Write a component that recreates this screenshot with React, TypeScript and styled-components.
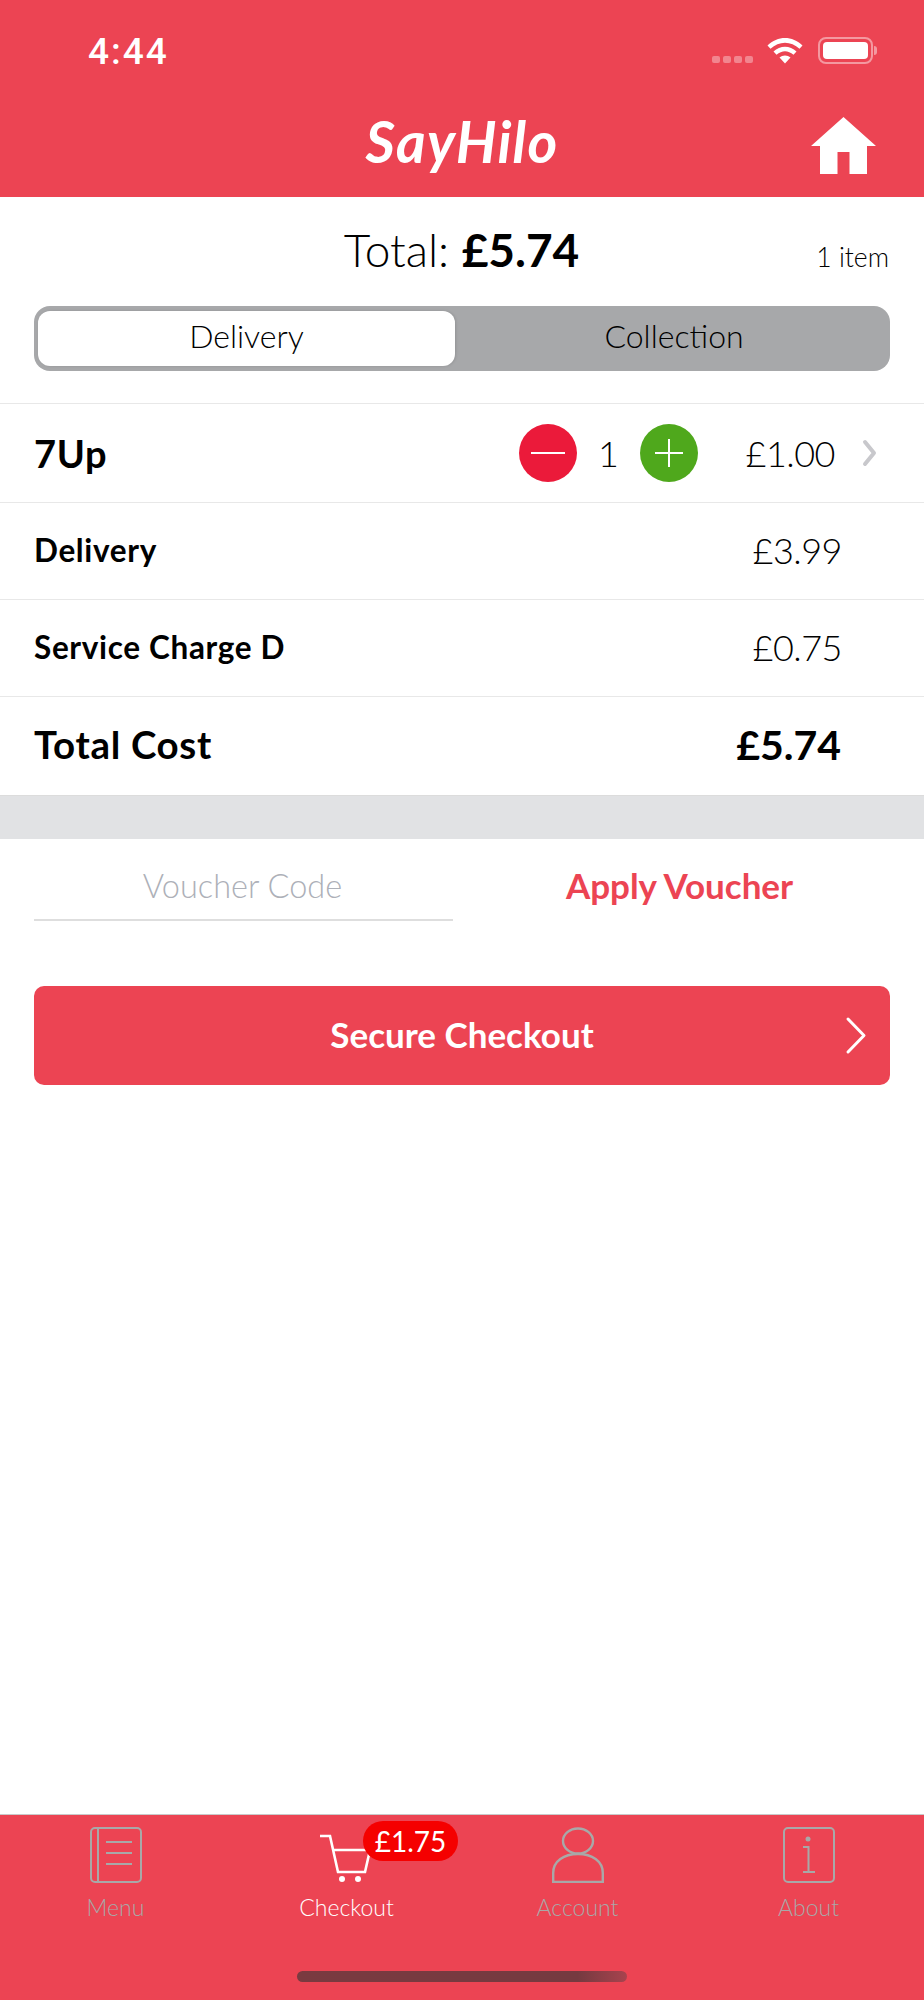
import React from 'react';
import styled, { createGlobalStyle } from 'styled-components';

const BRAND = '#ec4453';
const FONT = 'Lato, "Open Sans", "Liberation Sans", sans-serif';

const GlobalStyle = createGlobalStyle`
  html, body {
    margin: 0;
    padding: 0;
    background: #fff;
  }
  * {
    box-sizing: border-box;
  }
`;

const Page = styled.div`
  width: 924px;
  height: 2000px;
  display: flex;
  flex-direction: column;
  font-family: ${FONT};
  color: #000;
  background: #fff;
  overflow: hidden;
`;

const Header = styled.header`
  height: 197px;
  background: ${BRAND};
  flex-shrink: 0;
`;

const StatusBar = styled.div`
  height: 100px;
  display: flex;
  align-items: flex-start;
  justify-content: space-between;
  padding: 38px 51px 0 88px;
`;

const Clock = styled.span`
  font-family: Roboto, sans-serif;
  font-size: 37px;
  font-weight: 500;
  line-height: 27px;
  letter-spacing: 2px;
  color: #fff;
`;

const StatusIcons = styled.div`
  display: flex;
  align-items: flex-start;
  margin-top: -1px;
`;

const SignalDots = styled.div`
  display: flex;
  gap: 3px;
  margin: 19px 14px 0 0;
`;

const SignalDot = styled.span`
  width: 8px;
  height: 7px;
  border-radius: 2px;
  background: rgba(255, 255, 255, 0.35);
`;

const Battery = styled.div`
  width: 55px;
  height: 27px;
  margin-left: 15px;
  padding: 3px;
  border: 2px solid rgba(255, 255, 255, 0.45);
  border-radius: 8px;
  position: relative;

  &::before {
    content: '';
    display: block;
    height: 100%;
    border-radius: 4px;
    background: #fff;
  }

  &::after {
    content: '';
    position: absolute;
    right: -6px;
    top: 7px;
    width: 3px;
    height: 9px;
    border-radius: 0 3px 3px 0;
    background: rgba(255, 255, 255, 0.45);
  }
`;

const NavRow = styled.div`
  height: 97px;
  display: grid;
  grid-template-columns: 1fr auto 1fr;
  padding: 17px 48px 0 0;
`;

const Logo = styled.div`
  font-family: Lato, sans-serif;
  font-size: 57px;
  font-weight: 700;
  font-style: italic;
  line-height: 56px;
  letter-spacing: 1.2px;
  color: #fff;
  grid-column: 2;
  margin: -4px 0 0 48px;
`;

const HomeButton = styled.div`
  grid-column: 3;
  justify-self: end;
`;

const SummaryRow = styled.div`
  display: grid;
  grid-template-columns: 1fr auto 1fr;
  align-items: baseline;
  height: 109px;
  padding: 27px 35px 0 34px;
  flex-shrink: 0;
`;

const SummaryTotal = styled.div`
  grid-column: 2;
  font-size: 46px;
  font-weight: 300;
  line-height: 52px;
  white-space: nowrap;

  strong {
    font-weight: 700;
  }
`;

const ItemCount = styled.div`
  grid-column: 3;
  justify-self: end;
  font-size: 26.5px;
  font-weight: 300;
`;

const Segmented = styled.div`
  height: 65px;
  margin: 0 34px 32px;
  padding: 5px 0 5px 4px;
  display: grid;
  grid-template-columns: 417px 1fr;
  flex-shrink: 0;
  background: #a7a8aa;
  border-radius: 16px;
`;

const Segment = styled.div<{ $active?: boolean }>`
  display: flex;
  align-items: center;
  justify-content: center;
  font-size: 32px;
  font-weight: 300;
  border-radius: 12px;
  padding: 0 0 6px ${(p) => (p.$active ? 0 : 3)}px;
  background: ${(p) => (p.$active ? '#fff' : 'transparent')};
  box-shadow: ${(p) => (p.$active ? '1px 0 3px rgba(0, 0, 0, 0.12)' : 'none')};
`;

const Row = styled.div<{ $height: number }>`
  height: ${(p) => p.$height}px;
  display: flex;
  align-items: center;
  padding: 0 0 0 34px;
  border-top: 1px solid #e8e8e8;
  flex-shrink: 0;
`;

const RowLabel = styled.div<{ $size: number; $lift?: number }>`
  flex: 1;
  font-size: ${(p) => p.$size}px;
  font-weight: 700;
  letter-spacing: 0.65px;
  padding-bottom: ${(p) => p.$lift ?? 0}px;
`;

const RowValue = styled.div<{ $bold?: boolean }>`
  width: 140px;
  margin-right: ${(p) => (p.$bold ? 83 : 82)}px;
  padding-bottom: ${(p) => (p.$bold ? 4 : 3)}px;
  text-align: right;
  font-size: ${(p) => (p.$bold ? 41 : 36)}px;
  font-weight: ${(p) => (p.$bold ? 700 : 300)};
  letter-spacing: ${(p) => (p.$bold ? 0 : -0.5)}px;
`;

const QtyButton = styled.div<{ $color: string }>`
  width: 58px;
  height: 58px;
  border-radius: 50%;
  display: flex;
  align-items: center;
  justify-content: center;
  background: ${(p) => p.$color};
`;

const Qty = styled.div`
  width: 63px;
  text-align: center;
  font-size: 36px;
  font-weight: 300;
`;

const ItemPrice = styled.div`
  width: 137px;
  text-align: right;
  font-size: 36px;
  font-weight: 300;
  letter-spacing: -0.5px;
`;

const RowChevron = styled.div`
  width: 89px;
  padding-left: 26px;
  display: flex;
`;

const Band = styled.div`
  height: 44px;
  background: #e1e2e4;
  border-top: 1px solid #dcdcdc;
  flex-shrink: 0;
`;

const VoucherRow = styled.div`
  display: grid;
  grid-template-columns: 419px 1fr;
  gap: 0;
  margin: 0 34px;
  height: 147px;
  flex-shrink: 0;
`;

const VoucherInput = styled.div`
  height: 82px;
  display: flex;
  align-items: center;
  justify-content: center;
  padding: 13px 2px 0 0;
  font-size: 32.5px;
  font-weight: 300;
  color: #adb0b8;
  border-bottom: 2px solid #dedede;
`;

const ApplyVoucher = styled.div`
  height: 92px;
  display: flex;
  align-items: center;
  justify-content: center;
  padding-left: 16px;
  font-size: 35px;
  font-weight: 700;
  color: ${BRAND};
`;

const CheckoutButton = styled.div`
  height: 99px;
  margin: 0 34px;
  position: relative;
  display: flex;
  align-items: center;
  justify-content: center;
  flex-shrink: 0;
  padding-bottom: 3px;
  font-size: 35px;
  font-weight: 700;
  color: #fff;
  background: ${BRAND};
  border-radius: 10px;
`;

const CheckoutChevron = styled.div`
  position: absolute;
  right: 23px;
  top: 30px;
  display: flex;
`;

const Spacer = styled.div`
  flex: 1;
`;

const TabBar = styled.nav`
  height: 186px;
  background: ${BRAND};
  border-top: 1px solid #c9c9c9;
  display: flex;
  flex-direction: column;
  flex-shrink: 0;
`;

const Tabs = styled.div`
  display: grid;
  grid-template-columns: repeat(4, 1fr);
  padding-top: 12px;
`;

const Tab = styled.div<{ $active?: boolean }>`
  position: relative;
  display: flex;
  flex-direction: column;
  align-items: center;
  color: ${(p) => (p.$active ? '#fff' : '#a8a8a8')};
`;

const TabIcon = styled.div<{ $shift?: number }>`
  height: 58px;
  display: flex;
  margin-left: ${(p) => p.$shift ?? 0}px;
`;

const TabLabel = styled.div`
  margin-top: 8px;
  font-size: 23px;
  font-weight: 300;
  line-height: 28px;
`;

const PriceBadge = styled.div`
  position: absolute;
  left: 132px;
  top: -6px;
  width: 95px;
  height: 40px;
  display: flex;
  align-items: center;
  justify-content: center;
  border-radius: 20px;
  font-size: 28px;
  font-weight: 400;
  color: #fff;
  background: #f50000;
`;

const HomeIndicator = styled.div`
  width: 330px;
  height: 11px;
  margin: 50px auto 0;
  border-radius: 6px;
  background: linear-gradient(90deg, #7a3a40 0%, #753a40 85%, #a8434e 100%);
`;

function WifiIcon() {
  return (
    <svg width="36" height="27" viewBox="0 0 36 27">
      <path d="M0.5 8.5C10.5 -1.5 25.5 -1.5 35.5 8.5L32.5 11.8C24 3.8 12 3.8 3.5 11.8Z" fill="#fff" />
      <path d="M6.5 14.5C13 8.2 23 8.2 29.5 14.5L26.5 17.8C21 13 15 13 9.5 17.8Z" fill="#fff" />
      <path d="M12.5 20.5C15.5 17.8 20.5 17.8 23.5 20.5L18 26.5Z" fill="#fff" />
    </svg>
  );
}

function HomeIcon() {
  return (
    <svg width="65" height="57" viewBox="0 0 65 57">
      <path
        d="M32.5 0L65 29H56V57H38.5V35H26.5V57H9V29H0Z"
        fill="#fff"
      />
    </svg>
  );
}

function Chevron({ color, width, height, stroke }: { color: string; width: number; height: number; stroke: number }) {
  return (
    <svg width={width} height={height} viewBox={`0 0 ${width} ${height}`}>
      <path
        d={`M${stroke} ${stroke}L${width - stroke} ${height / 2}L${stroke} ${height - stroke}`}
        fill="none"
        stroke={color}
        strokeWidth={stroke}
        strokeLinecap="round"
        strokeLinejoin="round"
      />
    </svg>
  );
}

function MinusIcon() {
  return (
    <svg width="36" height="36" viewBox="0 0 36 36">
      <path d="M1 18H35" stroke="#fff" strokeWidth="2" />
    </svg>
  );
}

function PlusIcon() {
  return (
    <svg width="28" height="28" viewBox="0 0 28 28">
      <path d="M0 14H28M14 0V28" stroke="#fff" strokeWidth="2" />
    </svg>
  );
}

function MenuIcon() {
  return (
    <svg width="52" height="56" viewBox="0 0 52 56" fill="none" stroke="currentColor" strokeWidth="2">
      <rect x="1" y="1" width="50" height="54" rx="4" />
      <path d="M8 1V55M16 15H42M16 26H42M16 37H42" />
    </svg>
  );
}

function CartIcon() {
  return (
    <svg width="52" height="58" viewBox="0 0 52 58" fill="none" stroke="currentColor" strokeWidth="2.6">
      <path d="M1 9H11L19 45H46L51 23H14" />
      <circle cx="23" cy="52" r="3" fill="currentColor" stroke="none" />
      <circle cx="39" cy="52" r="3" fill="currentColor" stroke="none" />
    </svg>
  );
}

function AccountIcon() {
  return (
    <svg width="52" height="56" viewBox="0 0 52 56" fill="none" stroke="currentColor" strokeWidth="2.4">
      <ellipse cx="26" cy="14" rx="15" ry="12.5" />
      <path d="M1.2 55V46C1.2 34 12 27 26 27C40 27 50.8 34 50.8 46V55Z" />
    </svg>
  );
}

function AboutIcon() {
  return (
    <svg width="52" height="56" viewBox="0 0 52 56" fill="none" stroke="currentColor" strokeWidth="2">
      <rect x="1" y="1" width="50" height="54" rx="4" />
      <circle cx="25" cy="12" r="2.5" fill="currentColor" stroke="none" />
      <path d="M20 20H25.5V44M20 45H32" />
    </svg>
  );
}

export default function App() {
  return (
    <Page>
      <GlobalStyle />
      <Header>
        <StatusBar>
          <Clock>4:44</Clock>
          <StatusIcons>
            <SignalDots>
              <SignalDot />
              <SignalDot />
              <SignalDot />
              <SignalDot />
            </SignalDots>
            <WifiIcon />
            <Battery />
          </StatusIcons>
        </StatusBar>
        <NavRow>
          <Logo>SayHilo</Logo>
          <HomeButton>
            <HomeIcon />
          </HomeButton>
        </NavRow>
      </Header>

      <SummaryRow>
        <SummaryTotal>
          Total: <strong>£5.74</strong>
        </SummaryTotal>
        <ItemCount>1 item</ItemCount>
      </SummaryRow>

      <Segmented>
        <Segment $active>Delivery</Segment>
        <Segment>Collection</Segment>
      </Segmented>

      <Row $height={99}>
        <RowLabel $size={38}>7Up</RowLabel>
        <QtyButton $color="#eb1a3a">
          <MinusIcon />
        </QtyButton>
        <Qty>1</Qty>
        <QtyButton $color="#4fa81c">
          <PlusIcon />
        </QtyButton>
        <ItemPrice>£1.00</ItemPrice>
        <RowChevron>
          <Chevron color="#c8c8cc" width={17} height={30} stroke={4} />
        </RowChevron>
      </Row>
      <Row $height={97}>
        <RowLabel $size={31.5} $lift={3}>Delivery</RowLabel>
        <RowValue>£3.99</RowValue>
      </Row>
      <Row $height={97}>
        <RowLabel $size={31.5} $lift={3}>Service Charge D</RowLabel>
        <RowValue>£0.75</RowValue>
      </Row>
      <Row $height={99}>
        <RowLabel $size={38.5} $lift={4}>Total Cost</RowLabel>
        <RowValue $bold>£5.74</RowValue>
      </Row>

      <Band />

      <VoucherRow>
        <VoucherInput>Voucher Code</VoucherInput>
        <ApplyVoucher>Apply Voucher</ApplyVoucher>
      </VoucherRow>

      <CheckoutButton>
        Secure Checkout
        <CheckoutChevron>
          <Chevron color="#fff" width={22} height={39} stroke={3} />
        </CheckoutChevron>
      </CheckoutButton>

      <Spacer />

      <TabBar>
        <Tabs>
          <Tab>
            <TabIcon>
              <MenuIcon />
            </TabIcon>
            <TabLabel>Menu</TabLabel>
          </Tab>
          <Tab $active>
            <TabIcon $shift={-3}>
              <CartIcon />
            </TabIcon>
            <TabLabel>Checkout</TabLabel>
            <PriceBadge>£1.75</PriceBadge>
          </Tab>
          <Tab>
            <TabIcon>
              <AccountIcon />
            </TabIcon>
            <TabLabel>Account</TabLabel>
          </Tab>
          <Tab>
            <TabIcon>
              <AboutIcon />
            </TabIcon>
            <TabLabel>About</TabLabel>
          </Tab>
        </Tabs>
        <HomeIndicator />
      </TabBar>
    </Page>
  );
}
